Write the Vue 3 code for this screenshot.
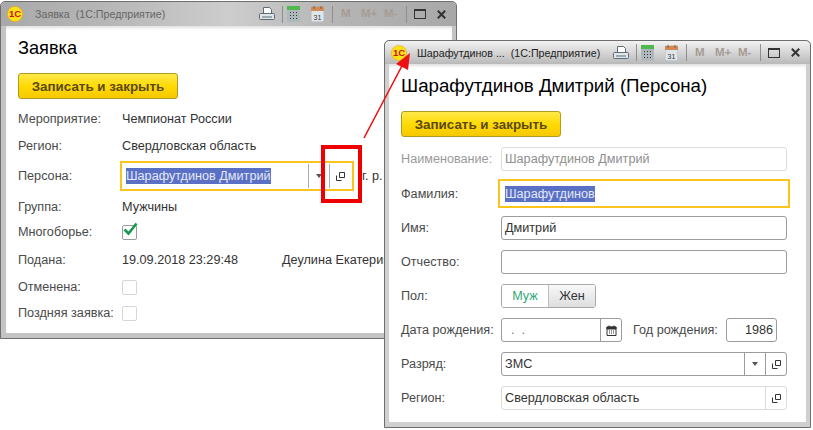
<script setup>
const rowsA = [
  { label: 'Мероприятие:', value: 'Чемпионат России', cls: 'h27' },
  { label: 'Регион:', value: 'Свердловская область', cls: 'h27' }
]
const rowsB = [
  { label: 'Отменена:', cls: 'h20' },
  { label: 'Поздняя заявка:', cls: 'h32' }
]
</script>

<template>
  <div class="desk">
    <!-- back window -->
    <section class="win win-a">
      <header class="bar inactive">
        <svg class="logo" viewBox="0 0 16 16"><circle cx="8" cy="8" r="7.6" fill="#ffe11a" stroke="#e8a800" stroke-width=".6"/><text x="8" y="11.2" text-anchor="middle" class="logo-t">1С</text></svg>
        <span class="title">Заявка&nbsp; (1С:Предприятие)</span>
        <span class="fill"></span>
        <svg class="ic print" viewBox="0 0 16 14"><path d="M4.5.5h6l2 2v4h-8z" fill="#fff" stroke="#5c6b75"/><path d="M1.5 6.5h13a1 1 0 0 1 1 1v4a1 1 0 0 1-1 1h-13a1 1 0 0 1-1-1v-4a1 1 0 0 1 1-1z" fill="#dfe6ea" stroke="#5c6b75"/><path d="M3 10h10" stroke="#5c6b75"/></svg>
        <i class="sep s1"></i>
        <svg class="ic calc" viewBox="0 0 13 16"><rect width="13" height="16" rx="1" fill="#aeb8bd"/><rect width="13" height="4" fill="#4fb84f"/><path d="M3 6h1v1H3zM6 6h1v1H6zM9 6h1v1H9zM3 9h1v1H3zM6 9h1v1H6zM9 9h1v1H9zM3 12h1v1H3zM6 12h1v1H6zM9 12h1v1H9z" fill="#333"/></svg>
        <svg class="ic cal" viewBox="0 0 13 16"><rect y="1" width="13" height="15" rx="1" fill="#dfe6ea" stroke="#8a9aa3" stroke-width=".6"/><rect y="1" width="13" height="4" fill="#cf8a55"/><path d="M3 0v3M10 0v3" stroke="#8a5a35"/><text x="6.5" y="13.5" text-anchor="middle" class="cal-t">31</text></svg>
        <i class="sep s2"></i>
        <span class="mem m1">M</span><span class="mem m2">M+</span><span class="mem m3">M-</span>
        <i class="sep s3"></i>
        <span class="max"></span>
        <svg class="close" viewBox="0 0 9 9"><path d="M.8.8l7.4 7.4M8.2.8L.8 8.2" stroke="#333" stroke-width="2"/></svg>
      </header>
      <div class="body body-a">
        <h1 class="h h-a">Заявка</h1>
        <button class="save">Записать и закрыть</button>
        <div class="rows-a">
          <div v-for="r in rowsA" :key="r.label" class="row" :class="r.cls">
            <span class="lab">{{ r.label }}</span><span class="val">{{ r.value }}</span>
          </div>
          <div class="row h34">
            <span class="lab">Персона:</span>
            <div class="focus wide">
              <span class="sel">Шарафутдинов Дмитрий</span>
              <span class="fill"></span>
              <i class="dv"></i><span class="cell arrow-cell"><i class="tri"></i></span>
              <i class="dv"></i><span class="cell open-cell">
                <svg class="open" viewBox="0 0 9 9"><path d="M3.5 .5h5v5h-5zM.5 3.5v5h5" fill="none" stroke="#333"/></svg>
              </span>
            </div>
            <span class="val after">г. р.</span>
          </div>
          <div class="row h28"><span class="lab">Группа:</span><span class="val">Мужчины</span></div>
          <div class="row h22">
            <span class="lab">Многоборье:</span>
            <span class="chk">
              <svg class="tick" viewBox="0 0 15 14"><path d="M1.5 7.5l4 4L13.5 1.5" fill="none" stroke="#169a4f" stroke-width="2.6"/></svg>
            </span>
          </div>
          <div class="row h34">
            <span class="lab">Подана:</span><span class="val date">19.09.2018 23:29:48</span><span class="val">Деулина Екатерина</span>
          </div>
          <div v-for="r in rowsB" :key="r.label" class="row" :class="r.cls">
            <span class="lab">{{ r.label }}</span><span class="chk off"></span>
          </div>
        </div>
      </div>
    </section>

    <!-- front window -->
    <section class="win win-b">
      <header class="bar active">
        <svg class="logo" viewBox="0 0 16 16"><circle cx="8" cy="8" r="7.6" fill="#ffe11a" stroke="#e8a800" stroke-width=".6"/><text x="8" y="11.2" text-anchor="middle" class="logo-t">1С</text></svg>
        <span class="title dark">Шарафутдинов ...&nbsp; (1С:Предприятие)</span>
        <span class="fill"></span>
        <svg class="ic print" viewBox="0 0 16 14"><path d="M4.5.5h6l2 2v4h-8z" fill="#fff" stroke="#5c6b75"/><path d="M1.5 6.5h13a1 1 0 0 1 1 1v4a1 1 0 0 1-1 1h-13a1 1 0 0 1-1-1v-4a1 1 0 0 1 1-1z" fill="#dfe6ea" stroke="#5c6b75"/><path d="M3 10h10" stroke="#5c6b75"/></svg>
        <i class="sep s1"></i>
        <svg class="ic calc" viewBox="0 0 13 16"><rect width="13" height="16" rx="1" fill="#aeb8bd"/><rect width="13" height="4" fill="#4fb84f"/><path d="M3 6h1v1H3zM6 6h1v1H6zM9 6h1v1H9zM3 9h1v1H3zM6 9h1v1H6zM9 9h1v1H9zM3 12h1v1H3zM6 12h1v1H6zM9 12h1v1H9z" fill="#333"/></svg>
        <svg class="ic cal" viewBox="0 0 13 16"><rect y="1" width="13" height="15" rx="1" fill="#dfe6ea" stroke="#8a9aa3" stroke-width=".6"/><rect y="1" width="13" height="4" fill="#cf8a55"/><path d="M3 0v3M10 0v3" stroke="#8a5a35"/><text x="6.5" y="13.5" text-anchor="middle" class="cal-t">31</text></svg>
        <i class="sep s2"></i>
        <span class="mem m1">M</span><span class="mem m2">M+</span><span class="mem m3">M-</span>
        <i class="sep s3"></i>
        <span class="max"></span>
        <svg class="close" viewBox="0 0 9 9"><path d="M.8.8l7.4 7.4M8.2.8L.8 8.2" stroke="#333" stroke-width="2"/></svg>
      </header>
      <div class="body body-b">
        <h1 class="h h-b">Шарафутдинов Дмитрий (Персона)</h1>
        <button class="save save-b">Записать и закрыть</button>
        <div class="rows-b">
          <div class="rowb"><span class="labb muted">Наименование:</span><div class="inp dis muted2">Шарафутдинов Дмитрий</div></div>
          <div class="rowb tall">
            <span class="labb">Фамилия:</span>
            <div class="focus focus-b"><span class="sel">Шарафутдинов</span></div>
          </div>
          <div class="rowb"><span class="labb">Имя:</span><div class="inp">Дмитрий</div></div>
          <div class="rowb"><span class="labb">Отчество:</span><div class="inp"></div></div>
          <div class="rowb">
            <span class="labb">Пол:</span>
            <div class="toggle"><span class="on">Муж</span><span class="offb">Жен</span></div>
          </div>
          <div class="rowb">
            <span class="labb">Дата рождения:</span>
            <div class="inp date-inp">
              <span class="dots">.&nbsp;&nbsp;.</span><span class="fill"></span>
              <span class="btn">
                <svg class="calmini" viewBox="0 0 11 11"><path d="M1 2h9v8.5H1z" fill="none" stroke="#333"/><path d="M1 2h9v2H1zM3 .5v2M8 .5v2" fill="#333" stroke="#333"/><path d="M3 5.5h1v1H3zM5 5.5h1v1H5zM7 5.5h1v1H7zM3 7.5h1v1H3zM5 7.5h1v1H5zM7 7.5h1v1H7z" fill="#333"/></svg>
              </span>
            </div>
            <span class="yl">Год рождения:</span>
            <div class="inp year">1986</div>
          </div>
          <div class="rowb">
            <span class="labb">Разряд:</span>
            <div class="inp">
              <span>ЗМС</span><span class="fill"></span>
              <span class="btn"><i class="tri"></i></span>
              <span class="btn">
                <svg class="open" viewBox="0 0 9 9"><path d="M3.5 .5h5v5h-5zM.5 3.5v5h5" fill="none" stroke="#333"/></svg>
              </span>
            </div>
          </div>
          <div class="rowb">
            <span class="labb">Регион:</span>
            <div class="inp dis">
              <span>Свердловская область</span><span class="fill"></span>
              <span class="btn">
                <svg class="open" viewBox="0 0 9 9"><path d="M3.5 .5h5v5h-5zM.5 3.5v5h5" fill="none" stroke="#333"/></svg>
              </span>
            </div>
          </div>
        </div>
      </div>
    </section>

    <!-- annotations -->
    <div class="mark"></div>
    <svg class="arrow" viewBox="0 0 813 430">
      <path d="M364 138L404 62" stroke="#ee1111" stroke-width="1.6" fill="none"/>
      <path d="M410 53L408 70L396 64z" fill="#ee1111"/>
    </svg>
  </div>
</template>

<style scoped>
.desk {
  position: relative;
  width: 813px;
  height: 430px;
  overflow: hidden;
  background: #fff;
  font: 12.65px "Liberation Sans", Arial, sans-serif;
  color: #333;
}
.win {
  position: absolute;
  box-sizing: border-box;
  display: flex;
  flex-direction: column;
  background: #c4c4c4;
  border: 1px solid #6e6e6e;
  border-radius: 5px 5px 0 0;
  padding: 0 4px 5px;
}
.win-a { left: 0; top: 1px; width: 457px; height: 338px; padding-left: 5px; }
.win-b { left: 384px; top: 40px; width: 427px; height: 388px; background: #d0d0d0; }
.bar {
  position: relative;
  height: 24px;
  flex: none;
  margin: 0 -4px;
  padding: 0 4px;
  display: flex;
  align-items: center;
  border-radius: 5px 5px 0 0;
}
.inactive { margin-left: -5px; background: linear-gradient(90deg, #a9a9a9 0, #b8b8b8 25%, #cdcdcd 50%, #b4b4b4 75%, #a8a8a8 100%); }
.active { height: 23px; background: linear-gradient(#f2f2f2, #b9b9b9); }
.logo { width: 16px; height: 16px; margin-left: 2px; flex: none; }
.logo-t { font: bold 9.5px "Liberation Sans", sans-serif; fill: #c8161d; }
.title { margin-left: 12px; font-size: 10.7px; color: #666; white-space: nowrap; }
.title.dark { margin-left: 10px; color: #222; }
.fill { flex: 1; }
.ic { flex: none; }
.print { width: 16px; height: 14px; }
.sep { flex: none; width: 1px; height: 17px; background: #8e8e8e; }
.s1 { margin: 0 4px 0 7px; }
.calc, .cal { width: 13px; height: 16px; }
.cal { margin-left: 11px; }
.cal-t { font: 7px "Liberation Sans", sans-serif; fill: #333; }
.s2 { margin: 0 8px; }
.mem { flex: none; font-size: 11.5px; font-weight: bold; color: #a69c94; line-height: 1; }
.m1 { width: 9px; }
.m2 { width: 16px; margin-left: 11px; }
.m3 { width: 14px; margin-left: 7px; }
.s3 { margin: 0 7px 0 8px; }
.max {
  flex: none;
  box-sizing: border-box;
  width: 12px;
  height: 10px;
  border: 1px solid #333;
  border-top-width: 2px;
}
.close { flex: none; width: 9px; height: 9px; margin: 0 6px 0 11px; }
.body {
  flex: 1;
  background: #fff;
  box-shadow: 0 3px 3px -1px rgba(0, 0, 0, .12) inset;
  display: flex;
  flex-direction: column;
  align-items: flex-start;
  min-height: 0;
  overflow: hidden;
}
.body-a { padding: 0 0 0 12px; }
.body-b { padding: 0 0 0 12px; }
.h {
  margin: 0;
  font-weight: normal;
  color: #000;
  white-space: nowrap;
}
.h-a { font-size: 18.2px; line-height: 20px; margin-top: 12px; }
.h-b { font-size: 18.7px; line-height: 22px; margin-top: 11px; }
.save {
  box-sizing: border-box;
  flex: none;
  width: 160px;
  height: 26px;
  margin-top: 15px;
  padding: 0;
  background: linear-gradient(#ffe94a, #ffd900 55%, #f6c800);
  border: 1px solid #b39a20;
  border-radius: 3px;
  color: #5b4a12;
  font: bold 13.4px "Liberation Sans", sans-serif;
}
.save-b { margin-top: 14px; }
.rows-a { margin-top: 6px; width: 100%; }
.row { display: flex; align-items: center; white-space: nowrap; }
.h27 { height: 27px; }
.h20 { height: 20px; }
.h22 { height: 22px; }
.h28 { height: 28px; }
.h32 { height: 32px; }
.h34 { height: 34px; }
.lab { flex: none; width: 104px; color: #4a4a4a; }
.val { color: #333; }
.date { width: 160px; }
.focus {
  box-sizing: border-box;
  display: flex;
  align-items: center;
  border: 2px solid #fcc51e;
  background: #fff;
}
.wide { width: 234px; height: 30px; margin-left: -2px; padding-left: 4px; }
.after { margin-left: 8px; }
.sel { background: #5a70c4; color: #e4e8f8; line-height: 16px; }
.dv { flex: none; width: 1px; height: 24px; background: #aaa; }
.cell { flex: none; display: flex; align-items: center; justify-content: center; width: 20px; height: 24px; }
.open-cell { width: 22px; justify-content: flex-start; padding-left: 6px; box-sizing: border-box; }
.tri {
  display: block;
  width: 0;
  height: 0;
  border: 3px solid transparent;
  border-top: 4px solid #555;
  border-bottom: 0;
}
.open { width: 9px; height: 9px; display: block; }
.chk {
  box-sizing: border-box;
  position: relative;
  width: 15px;
  height: 15px;
  border: 1px solid #9a9a9a;
  border-radius: 2px;
  background: #fff;
}
.chk.off { border-color: #d6d6d6; }
.tick { position: absolute; left: 0; top: -4px; width: 15px; height: 14px; }
.rows-b { margin-top: 5px; width: 100%; }
.rowb { display: flex; align-items: center; height: 34px; white-space: nowrap; }
.rowb.tall { height: 35px; }
.labb { flex: none; width: 100px; color: #4a4a4a; }
.muted { color: #9a9a9a; }
.inp {
  box-sizing: border-box;
  display: flex;
  align-items: center;
  width: 286px;
  height: 24px;
  padding-left: 3px;
  border: 1px solid #9c9c9c;
  border-radius: 3px;
  color: #333;
  background: #fff;
}
.inp.dis { border-color: #dcdcdc; }
.muted2 { color: #8f8f8f; }
.focus-b { width: 292px; height: 29px; margin-left: -3px; padding-left: 5px; }
.btn {
  flex: none;
  box-sizing: border-box;
  width: 21px;
  height: 22px;
  display: flex;
  align-items: center;
  justify-content: center;
  border-left: 1px solid #9c9c9c;
}
.inp.dis .btn { border-color: #dcdcdc; }
.date-inp { width: 121px; padding-left: 9px; }
.dots { color: #777; }
.calmini { width: 11px; height: 11px; }
.yl { margin-left: 11px; width: 93px; flex: none; color: #4a4a4a; }
.year { width: 51px; padding: 0 3px 0 0; justify-content: flex-end; }
.toggle {
  box-sizing: border-box;
  display: flex;
  width: 95px;
  height: 24px;
  border: 1px solid #a8a8a8;
  border-radius: 3px;
  overflow: hidden;
}
.toggle span { display: flex; align-items: center; justify-content: center; }
.on { width: 46px; color: #2fa877; background: #fff; border-right: 1px solid #bdbdbd; }
.offb { flex: 1; color: #333; background: linear-gradient(#f8f8f8, #dedede); }
.mark {
  position: absolute;
  left: 321px;
  top: 145px;
  width: 41px;
  height: 58px;
  box-sizing: border-box;
  border: 4px solid #ee0000;
}
.arrow { position: absolute; left: 0; top: 0; width: 813px; height: 430px; pointer-events: none; }
</style>
